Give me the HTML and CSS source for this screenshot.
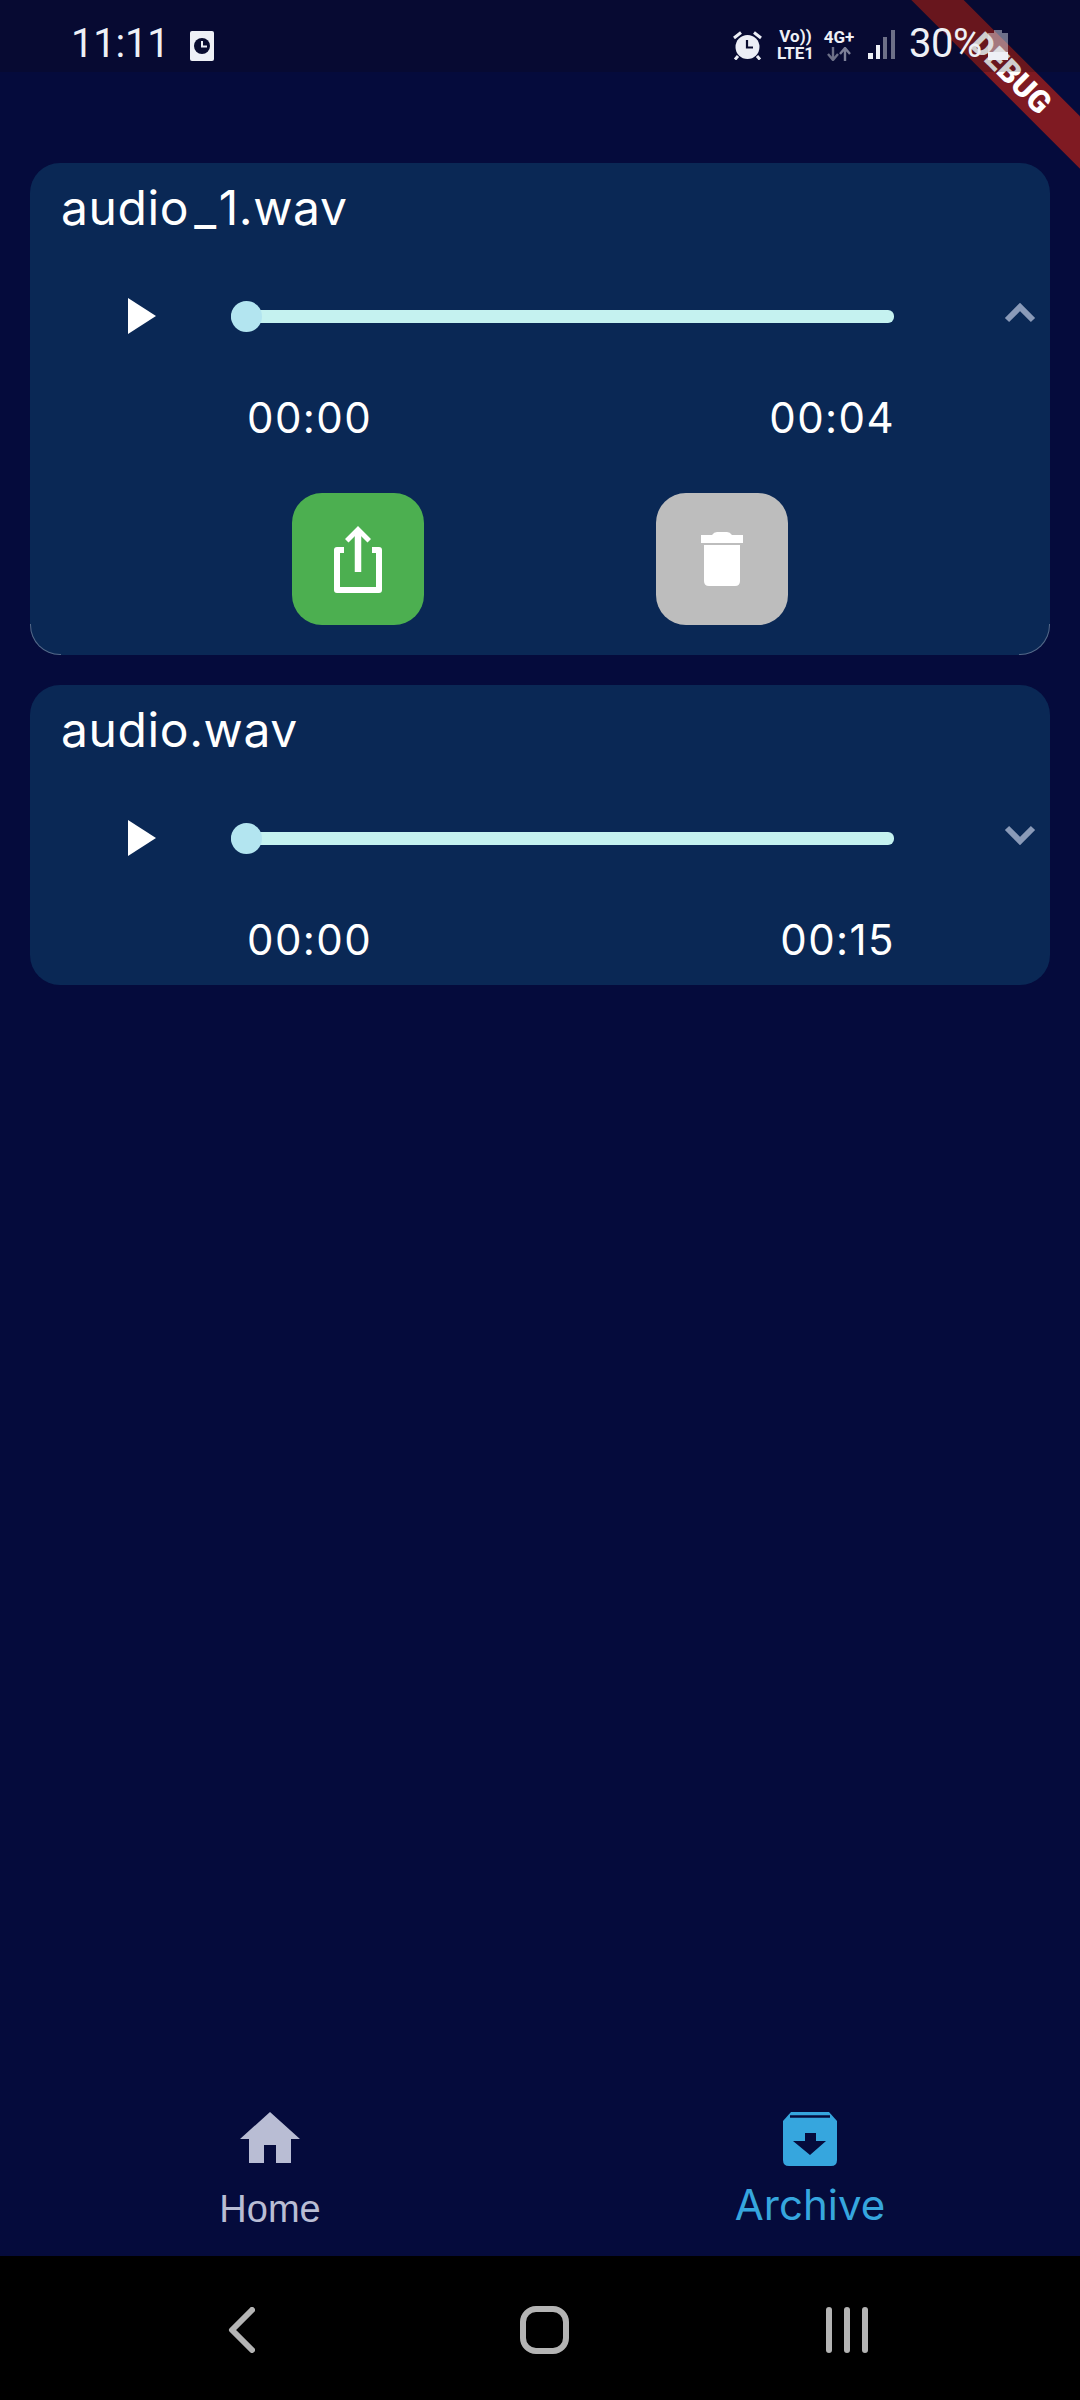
FILE: index.html
```html
<!DOCTYPE html>
<html lang="en">
<head>
<meta charset="utf-8">
<title>Archive</title>
<link rel="stylesheet" href="styles.css">
</head>
<body>
<div class="page">
  <div class="debug-banner"><span>DEBUG</span></div>
  <header class="status">
    <div class="status-left">
      <span class="clock">11:11</span>
      <svg class="notif" viewBox="0 0 24 30"><rect width="24" height="30" rx="2" fill="#eef0f6"/><circle cx="12" cy="15" r="8" fill="#0a0d30"/><path d="M12 10v5.5h5" fill="none" stroke="#eef0f6" stroke-width="2"/></svg>
    </div>
    <div class="status-right">
      <svg class="alarm" viewBox="0 0 29 29"><circle cx="14.500" cy="16" r="12" fill="#eceef6"/><path d="M1 7l7-5.500M28 7l-7-5.500M5 25l-3 3.500M24 25l3 3.500" stroke="#eceef6" stroke-width="3" fill="none"/><path d="M14 9v7.500h6" stroke="#0a0d30" stroke-width="2.200" fill="none"/></svg>
      <div class="net volte"><span>Vo))</span><span>LTE1</span></div>
      <div class="net fourg"><span>4G+</span>
        <svg class="updown" viewBox="0 0 24 14"><path d="M6 0v12M1 7l5 6 5-6" stroke="#6d7088" stroke-width="2.400" fill="none"/><path d="M18 14V2M13 7l5-6 5 6" stroke="#7d8098" stroke-width="2.400" fill="none"/></svg>
      </div>
      <svg class="signal" viewBox="0 0 27 29"><rect x="0" y="23" width="5" height="6" fill="#eef0f6"/><rect x="8" y="15" width="4" height="14" fill="#eef0f6"/><rect x="15" y="7" width="4" height="22" fill="#6d7088"/><rect x="23" y="0" width="4" height="29" fill="#6d7088"/></svg>
      <span class="pct">30%</span>
      <svg class="battery" viewBox="0 0 20 30"><path d="M6 0h8v3h6v19H0V3h6z" fill="#eef0f6" fill-opacity=".45"/><rect y="22" width="20" height="8" fill="#eef0f6"/></svg>
    </div>
  </header>

  <main class="list">
    <section class="card card-open">
      <h2 class="title">audio<span class="us">_</span>1.wav</h2>
      <div class="player">
        <svg class="play" viewBox="0 0 28 36"><path d="M0 0l28 18L0 36z" fill="#fff"/></svg>
        <div class="slider"><span class="thumb"></span></div>
        <svg class="chev chev-up" viewBox="0 0 32 20"><path d="M3 17L16 4l13 13" fill="none" stroke="#8a9ab8" stroke-width="6"/></svg>
      </div>
      <div class="times"><span>00:00</span><span>00:04</span></div>
      <div class="actions">
        <button class="act act-share" type="button">
          <svg viewBox="0 0 132 132"><path d="M52 57H45V97H87V57H80" fill="none" stroke="#fff" stroke-width="6" stroke-linejoin="round"/><path d="M66 79V38" stroke="#fff" stroke-width="6.500" fill="none"/><path d="M66 33L79 46 75.500 49.500 66 40 56.500 49.500 53 46z" fill="#fff"/></svg>
        </button>
        <button class="act act-del" type="button">
          <svg viewBox="0 0 132 132"><path d="M45 50V42H56Q58 39 61 39H71Q74 39 76 42H87V50z" fill="#fff"/><path d="M48 52H84V88Q84 93 79 93H53Q48 93 48 88z" fill="#fff"/></svg>
        </button>
      </div>
    </section>

    <section class="card">
      <h2 class="title">audio.wav</h2>
      <div class="player">
        <svg class="play" viewBox="0 0 28 36"><path d="M0 0l28 18L0 36z" fill="#fff"/></svg>
        <div class="slider"><span class="thumb"></span></div>
        <svg class="chev chev-down" viewBox="0 0 32 20"><path d="M3 3l13 13L29 3" fill="none" stroke="#8a9ab8" stroke-width="6"/></svg>
      </div>
      <div class="times"><span>00:00</span><span>00:15</span></div>
    </section>
  </main>

  <nav class="tabs">
    <a class="tab tab-home">
      <svg class="ico-home" viewBox="0 0 60 51"><path d="M30 0L60 27H51V51H36V33H24V51H9V27H0z" fill="#b9bdd4"/></svg>
      <span class="lbl-home">Home</span>
    </a>
    <a class="tab tab-archive">
      <svg class="ico-archive" viewBox="0 0 54 54"><path d="M8 0H46L54 9V48Q54 54 48 54H6Q0 54 0 48V9z" fill="#36a6de"/><path d="M7 4.500H47" stroke="#050b3c" stroke-width="2.500"/><path d="M22 21H33V29H43L27 43 10 29H22z" fill="#050b3c"/></svg>
      <span class="lbl-archive">Archive</span>
    </a>
  </nav>

  <footer class="sysnav">
    <svg class="sys-back" viewBox="0 0 27 46"><path d="M24 3L4 23l20 20" fill="none" stroke="#b4b4b4" stroke-width="6" stroke-linecap="round" stroke-linejoin="round"/></svg>
    <span class="sys-home"></span>
    <div class="sys-recent"><span></span><span></span><span></span></div>
  </footer>
</div>
</body>
</html>
```

FILE: styles.css
```css
* { box-sizing: border-box; }
html, body { margin: 0; padding: 0; background: #000; }
.page {
  position: relative;
  width: 1080px;
  height: 2400px;
  overflow: hidden;
  display: flex;
  flex-direction: column;
  background: #050b3c;
  font-family: "Inter", "Liberation Sans", sans-serif;
  color: #fff;
}

/* Debug ribbon */
.debug-banner {
  position: absolute;
  left: 851px;
  top: 55px;
  width: 320px;
  height: 37px;
  transform: rotate(45deg);
  background: #7f1a22;
  display: flex;
  align-items: center;
  justify-content: center;
  font: 900 31px/37px "Roboto", sans-serif;
  color: #fff;
}

/* Status bar */
.status {
  position: relative;
  height: 72px;
  flex: none;
  display: flex;
  justify-content: space-between;
  align-items: flex-start;
  padding: 0 72px 0 71px;
  background: rgba(14, 12, 10, .2);
  color: #eef0f6;
  font-family: "Roboto", sans-serif;
}
.status-left { display: flex; align-items: flex-start; }
.clock { font-size: 40px; line-height: 40px; margin-top: 24px; letter-spacing: -.200px; width: 119px; }
.notif { width: 24px; height: 30px; margin-top: 31px; }
.status-right { display: flex; align-items: flex-start; }
.alarm { width: 29px; height: 29px; margin-top: 31px; }
.net { display: flex; flex-direction: column; align-items: center; font-weight: 700; font-size: 17px; line-height: 17px; }
.volte { width: 39px; margin: 28px 0 0 14px; }
.fourg { width: 32px; margin: 29px 0 0 8px; }
.updown { width: 24px; height: 14px; margin-top: 1px; }
.signal { width: 27px; height: 29px; margin: 30px 0 0 13px; }
.pct { font-size: 40px; line-height: 40px; margin: 24px 0 0 14px; width: 79px; letter-spacing: -.500px; }
.battery { width: 20px; height: 30px; margin-top: 30px; }

/* List */
.list {
  flex: 1;
  display: flex;
  flex-direction: column;
  gap: 30px;
  padding: 91px 30px 0;
}
.card {
  position: relative;
  background: #0a2855;
  border-radius: 30px;
  height: 300px;
  padding-top: 16px;
}
.card-open { height: 492px; }
.card-open::before,
.card-open::after {
  content: "";
  position: absolute;
  bottom: 0;
  width: 30px;
  height: 30px;
  border-bottom: 1px solid rgba(255, 255, 255, .3);
}
.card-open::before { left: 0; border-left: 1px solid rgba(255, 255, 255, .3); border-bottom-left-radius: 30px; }
.card-open::after { right: 0; border-right: 1px solid rgba(255, 255, 255, .3); border-bottom-right-radius: 30px; }

.title {
  margin: 0 0 44px 31px;
  font-size: 48px;
  line-height: 58px;
  font-weight: 400;
  letter-spacing: .600px;
}
.us { padding-left: 5px; padding-right: 2px; }
.player {
  display: grid;
  grid-template-columns: 201px 663px 1fr;
  align-items: center;
  height: 70px;
}
.play { width: 28px; height: 36px; margin-left: 98px; }
.slider {
  position: relative;
  height: 13px;
  border-radius: 6px;
  background: #c5f2f0;
}
.thumb {
  position: absolute;
  left: 0;
  top: -9px;
  width: 31px;
  height: 31px;
  border-radius: 50%;
  background: #b3e5f0;
}
.chev { width: 32px; height: 20px; margin: 0 0 7px 110px; }
.times {
  display: flex;
  justify-content: space-between;
  margin: 41px 155px 0 217px;
  font-size: 42px;
  line-height: 51px;
  letter-spacing: 1.400px;
}
.actions {
  display: flex;
  justify-content: center;
  gap: 232px;
  margin-top: 50px;
}
.act {
  width: 132px;
  height: 132px;
  border: 0;
  padding: 0;
  border-radius: 30px;
}
.act svg { display: block; width: 132px; height: 132px; }
.act-share { background: #4caf50; }
.act-del { background: #bdbdbd; }

/* Bottom tabs */
.tabs {
  flex: none;
  height: 170px;
  display: grid;
  grid-template-columns: 1fr 1fr;
}
.tab { display: flex; flex-direction: column; align-items: center; padding-top: 26px; }
.ico-home { width: 60px; height: 51px; }
.lbl-home { font: 400 38px/44px "Liberation Sans", sans-serif; color: #b9bdd4; margin-top: 24px; }
.ico-archive { width: 54px; height: 54px; }
.lbl-archive { font-size: 42px; line-height: 51px; color: #36a6de; margin-top: 13px; }

/* System nav */
.sysnav {
  flex: none;
  height: 144px;
  background: #000;
  display: flex;
  align-items: center;
  padding: 4px 0 0 228px;
}
.sys-back { width: 27px; height: 46px; }
.sys-home {
  width: 49px;
  height: 48px;
  margin-left: 265px;
  border: 6px solid #b4b4b4;
  border-radius: 16px;
}
.sys-recent { display: flex; gap: 12px; margin-left: 257px; }
.sys-recent span { width: 6px; height: 46px; border-radius: 3px; background: #b4b4b4; }
```
